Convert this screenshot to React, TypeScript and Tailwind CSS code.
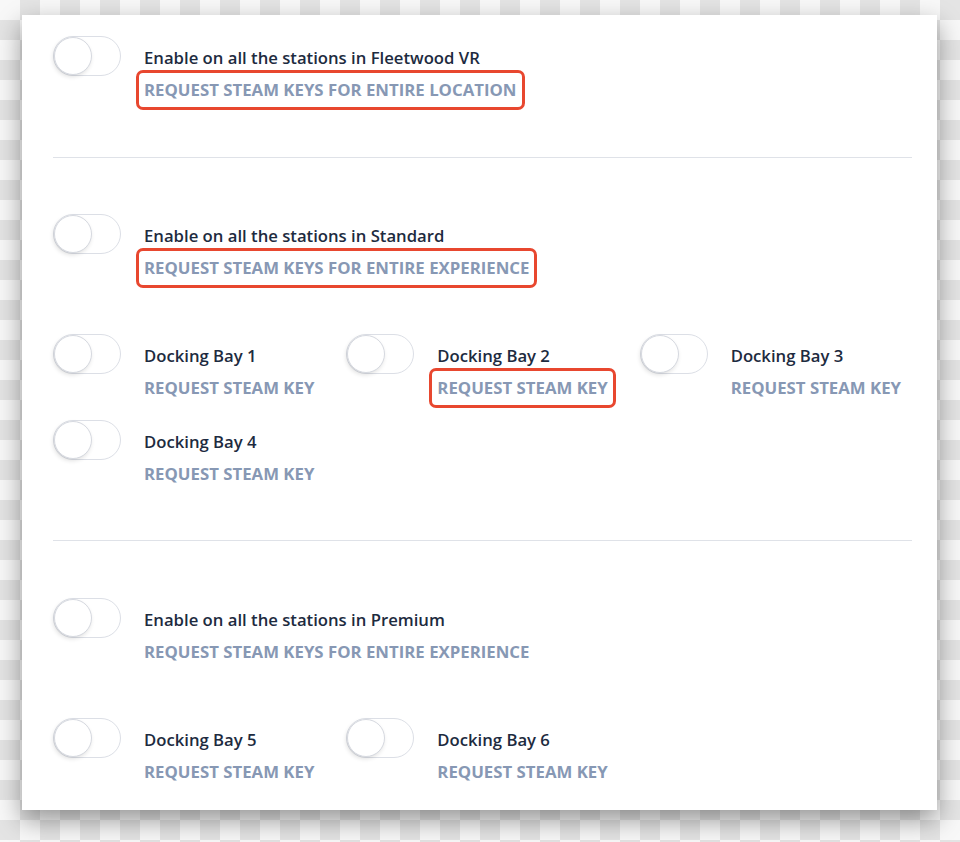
import React from 'react';

type Item = { title: string; link: string; marked?: boolean };

const Toggle = () => (
    <div className="relative w-[68px] h-[40px] shrink-0 rounded-full border border-[#dcdfe6] bg-white">
        <div className="absolute left-0 top-0 w-[38px] h-[38px] rounded-full bg-white border border-[#d6d9e0] shadow-[-1px_2px_4px_rgba(0,0,0,0.12)]"></div>
    </div>
);

const Row = ({ title, link, marked }: Item) => (
    <div className="flex items-start">
        <Toggle />
        <div className="ml-[23px] pt-[10px] flex flex-col items-start">
            <div className="text-[16.7px] leading-6 font-semibold text-[#1d2b40] whitespace-nowrap">{title}</div>
            <div
                className={`-ml-[8px] px-[5px] py-[5px] border-[3px] rounded-[7px] text-[16.8px] leading-6 font-bold uppercase text-[#8798b4] whitespace-nowrap ${
                    marked ? 'border-[#e8472f]' : 'border-transparent'
                }`}
            >
                {link}
            </div>
        </div>
    </div>
);

const Bays = ({ items }: { items: Item[] }) => (
    <div className="mt-[46px] grid grid-cols-3 w-[880px] gap-y-3">
        {items.map((b) => (
            <Row key={b.title} {...b} />
        ))}
    </div>
);

const Divider = ({ mt }: { mt: string }) => <div className={`${mt} h-px bg-[#dfe2e8]`}></div>;

const bay = (n: number, marked = false): Item => ({
    title: `Docking Bay ${n}`,
    link: 'Request Steam Key',
    marked,
});

export default function App() {
    return (
        <div
            className="w-[960px] h-[842px] overflow-hidden pl-[22px] pt-[15px] bg-[conic-gradient(#e4e4e4_25%,#f8f8f8_0_50%,#e4e4e4_0_75%,#f8f8f8_0)] bg-[length:40px_40px]"
            style={{ fontFamily: '"Open Sans", "Noto Sans", sans-serif' }}
        >
            <div className="w-[915px] h-[795px] bg-white pl-[31px] pr-[25px] pt-[21px] shadow-[0_10px_24px_rgba(0,0,0,0.4)]">
                {/* Location */}
                <Row title="Enable on all the stations in Fleetwood VR" link="Request Steam Keys for entire location" marked />
                <Divider mt="mt-[47px]" />

                {/* Standard */}
                <div className="mt-[56px]">
                    <Row title="Enable on all the stations in Standard" link="Request Steam Keys for entire experience" marked />
                    <Bays items={[bay(1), bay(2, true), bay(3), bay(4)]} />
                </div>
                <Divider mt="mt-[46px]" />

                {/* Premium */}
                <div className="mt-[57px]">
                    <Row title="Enable on all the stations in Premium" link="Request Steam Keys for entire experience" />
                    <Bays items={[bay(5), bay(6)]} />
                </div>
            </div>
        </div>
    );
}
